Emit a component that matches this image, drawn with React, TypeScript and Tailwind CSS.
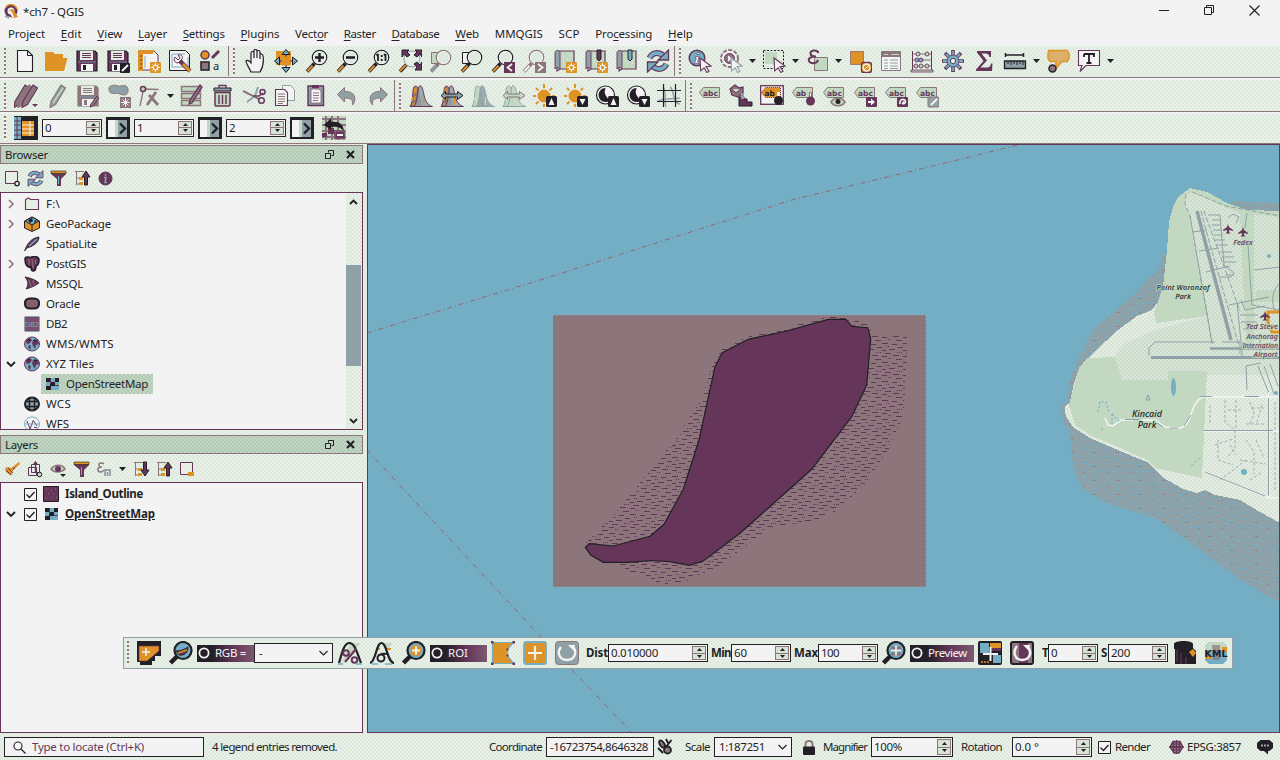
import React, { useLayoutEffect, useRef, useState } from "react";

const K = "#221f26";
const P = "#65365a";
const M = "#8c757b";
const G = "#c2d8c1";
const S = "#8fa1a6";
const B = "#74aec5";
const O = "#df9226";
const W = "#f3f3f3";

const dither =
  "bg-[repeating-conic-gradient(#dde9dc_0_25%,#e9f0e8_0_50%)] bg-[length:4px_4px]";
const ditherGreen =
  "bg-[repeating-conic-gradient(#b4c9b8_0_25%,#c0d6c0_0_50%)] bg-[length:4px_4px]";

/* Text set to a given width by adjusting its letter spacing. */
function Fit({ w, children, className = "" }: { w: number; children: React.ReactNode; className?: string }) {
  const ref = useRef<HTMLSpanElement>(null);
  const [ls, setLs] = useState(0);
  useLayoutEffect(() => {
    const el = ref.current;
    if (!el) return;
    const n = (el.textContent || "").length;
    setLs((w - el.getBoundingClientRect().width) / n);
  }, [w]);
  return (
    <span ref={ref} className={"inline-block shrink-0 whitespace-pre " + className} style={{ letterSpacing: ls }}>
      {children}
    </span>
  );
}

function Svg({ children, s = 24 }: { children: React.ReactNode; s?: number }) {
  return (
    <svg width={s} height={s} viewBox={"0 0 " + s + " " + s} fill="none" className="block shrink-0">
      {children}
    </svg>
  );
}

function Cell({ children }: { children: React.ReactNode }) {
  return (
    <div className="flex w-[31px] shrink-0 items-center justify-center">
      <Svg>{children}</Svg>
    </div>
  );
}

function Grip({ h = "h-[27px]" }: { h?: string }) {
  return <div className={"w-[2px] shrink-0 bg-[linear-gradient(#8c757b_50%,#f3f3f3_50%)] bg-[length:2px_4px] " + h} />;
}

function Arrow() {
  return (
    <svg width="7" height="4" viewBox="0 0 7 4" className="shrink-0">
      <path d="M0 0h7L3.5 4z" fill={K} />
    </svg>
  );
}

/* ---------- shared glyph parts ---------- */
const Lens = ({ c = K, h = O, f = "#dfeadf" }: { c?: string; h?: string; f?: string }) => (
  <>
    <path d="M9.5 14.5L2 22.500" stroke={c} strokeWidth="3.600" />
    <path d="M7.500 16.700L2.300 22.200" stroke={h} strokeWidth="2" />
    <circle cx="14.500" cy="8.500" r="7.200" fill={f} stroke={c} strokeWidth="1.200" />
    <circle cx="14.500" cy="8.500" r="6" stroke={W} strokeWidth="1" />
  </>
);
const Floppy = ({ c = P, b = K }: { c?: string; b?: string }) => (
  <>
    <path d="M2 2h18l2 2v18H2z" fill={c} stroke={b} strokeWidth="1.200" />
    <path d="M5 2h13v9H5z" fill="#e4ede3" />
    <path d="M7 4.500h9M7 6.500h9M7 8.500h9" stroke={c} />
    <path d="M3.500 13h17" stroke={B} strokeDasharray="2 1" />
    <path d="M6 15h12v7H6z" fill={W} />
    <path d="M8 16h3v5H8z" fill={b} />
  </>
);
const Badge = () => (
  <>
    <rect x="13" y="13" width="11" height="11" rx="1" fill={O} />
    <circle cx="18.500" cy="18.500" r="2.300" stroke={W} strokeWidth="1.200" />
    <path d="M18.500 14v2M18.500 21v2M14 18.500h2M21 18.500h2M15.500 15.500l1 1M20.500 20.500l1 1M21.500 15.500l-1 1M16.500 20.500l-1 1" stroke={W} />
  </>
);
const Cursor = ({ c = P }: { c?: string }) => <path d="M12 9l11 8-5 .6 3 4.600-2.200 1.300-2.700-4.700-3.400 3z" fill={W} stroke={c} strokeWidth="1.100" />;
const Refresh = () => (
  <>
    <path d="M3.500 9C6 4 11 2.500 17 6" stroke={P} strokeWidth="6" />
    <path d="M3.500 9C6 4 11 2.500 17 6" stroke={B} strokeWidth="3.600" />
    <path d="M22.500 1v10H12z" fill={B} stroke={P} strokeWidth="1.300" />
    <path d="M20.500 15C18 20 13 21.500 7 18" stroke={P} strokeWidth="6" />
    <path d="M20.500 15C18 20 13 21.500 7 18" stroke={B} strokeWidth="3.600" />
    <path d="M1.500 23V13H12z" fill={B} stroke={P} strokeWidth="1.300" />
  </>
);
const Pencil = ({ c = M, f = M, x = 0 }: { c?: string; f?: string; x?: number }) => (
  <path d={"M" + (16 + x) + " 1l4.500 3-10 16.500-5.500 3 1-6z"} fill={f} stroke={c} strokeWidth="1.2" />
);
const Book = () => (
  <>
    <path d="M4 2h17v18H7l-3 2z" fill={G} stroke={P} strokeWidth="1.200" />
    <path d="M2 3.500C2 1 7 1 7 3.500V20c-1-2-5-2-5 0z" fill={S} stroke={P} strokeWidth="0.900" />
    <path d="M10 7h1M14 10h1M17 6h1M12 15h1M10 12h1M17 14h1" stroke={W} />
  </>
);
const Label = ({ t = "abc" }: { t?: string }) => (
  <>
    <path d="M1.500 8.500l4-5h16v10h-16z" fill={G} stroke={M} />
    <text x="5" y="11.500" fontFamily="DejaVu Sans" fontSize="7.500" fontWeight="bold" fill={P} textLength={t.length === 3 ? 15 : 10}>{t}</text>
  </>
);
const Histo = ({ a = P, b = M, c = S, o = O }: { a?: string; b?: string; c?: string; o?: string }) => (
  <>
    <path d="M1 22.500C4 19 3.500 8 4.500 3.500 6 1 9 2 9.500 6L12 22.500z" fill={b} stroke={a} />
    <path d="M5 22.500C8.500 19 8.500 6 10 2.500 12.500-.5 14 6 15 11c1 6 4 10.500 8.500 11.500z" fill={c} fillOpacity="0.850" stroke={a} />
    <path d="M5.500 4v6M7 3.500v5M3.500 13v4M6 12v4M14.500 13v8M3 20h3" stroke={o} strokeWidth="1.300" />
  </>
);
const Sun = () => (
  <>
    <path d="M11 0v23M0 12h22M3 4l16 16M19 4L3 20" stroke={O} strokeWidth="2" />
    <circle cx="11" cy="12" r="8" fill="#e6ede5" />
    <circle cx="11" cy="12" r="6.500" fill={O} />
  </>
);
const Contrast = () => (
  <>
    <circle cx="10.500" cy="11" r="9" fill={W} stroke={K} strokeWidth="1.200" />
    <path d="M10.500 4a7 7 0 1 0 5 12A9 9 0 0 1 10.500 4z" fill={K} />
  </>
);
const Up = () => (
  <>
    <rect x="13" y="12" width="11" height="11" rx="1.500" fill={K} />
    <path d="M18.500 14l3 7h-6z" fill={W} />
  </>
);
const Down = () => (
  <>
    <rect x="13" y="12" width="11" height="11" rx="1.500" fill={K} />
    <path d="M15.500 15h6l-3 6z" fill={W} />
  </>
);

/* ---------- toolbars ---------- */
const Divider = () => <div className="w-px shrink-0 self-stretch bg-[#8c757b]" />;

function Toolbar1() {
  return (
    <div className={"flex h-8 shrink-0 items-center pb-[2px] pl-1 pr-2 shadow-[inset_0_-1px_0_#8c757b] " + dither}>
      <Grip />
      <div className="w-[3px] shrink-0" />
      <Cell><path d="M4.500 1.500h10l5 5v16h-15z" fill={W} stroke={K} strokeWidth="1.100" /><path d="M14.500 1.500v5h5" stroke={K} /></Cell>
      <Cell><path d="M1 3h8l2 2h8v4h4.500L20 22H1z" fill={O} /></Cell>
      <Cell><Floppy /></Cell>
      <Cell><Floppy /><rect x="14" y="14" width="10" height="10" rx="1" fill={K} /><path d="M16 22l6-6" stroke={W} strokeWidth="2" /></Cell>
      <Cell><path d="M2 2h15l4 4v15H2z" fill={W} stroke={P} /><path d="M1 1h15v4H6v17H1z" fill={O} /><path d="M3 7h2M3 11h2M3 15h2M3 19h2" stroke={P} /><path d="M8 7v12" stroke={B} /><Badge /></Cell>
      <Cell><path d="M1.500 1.500h16l4 4v16h-20z" fill={W} stroke={K} /><path d="M4 5h13M4 5v13h16V8" stroke={B} /><path d="M11 11l11 11" stroke={P} strokeWidth="4.500" /><path d="M15 15l7 7" stroke={O} strokeWidth="2.800" /><path d="M7 8l3 3 2-2-2-3c4-1 5 2 4 4l-4 4c-3 0-5-3-3-6z" fill={W} stroke={P} /></Cell>
      <Cell><circle cx="6" cy="6" r="4" fill={O} stroke={P} strokeWidth="1.500" /><path d="M13 9l7-7" stroke={P} strokeWidth="3" /><rect x="2" y="13" width="8" height="8" fill={M} stroke={K} strokeWidth="1.500" /><text x="14" y="21" fontFamily="Noto Sans" fontSize="11" fill={K}>a</text></Cell>
      <div className="w-[2px]" />
      <Divider />
      <div className="w-[4px] shrink-0" />
      <Grip />
      <div className="w-[4px] shrink-0" />
      <Cell><path d="M8 23C6 18 3 15 3 12c2-2 4 1 5 2V4c0-2 3-2 3 0v5V2c0-2 3-2 3 0v7V3c0-2 3-2 3 0v7V6c0-2 3-1 3 1 1 6 0 11-3 16z" fill={W} stroke={K} strokeWidth="1.200" /></Cell>
      <Cell><path d="M2 2h15v14H2z" fill={O} /><path d="M12 1v22M1 12h22" stroke={P} strokeWidth="1.500" /><path d="M12 .5l4 5H8zM12 23.500l-4-5h8zM.5 12l5-4v8zM23.500 12l-5-4v8z" fill={B} stroke={K} /><rect x="7.500" y="7.500" width="9" height="9" fill={O} /></Cell>
      <Cell><Lens /><path d="M10 8.500h9M14.500 4v9" stroke={K} strokeWidth="2.400" /></Cell>
      <Cell><Lens /><path d="M10 8.500h9" stroke={K} strokeWidth="2.600" /></Cell>
      <Cell><Lens /><path d="M11 5v7M18.500 5v7M9.500 6.500L11 5M17 6.500L18.500 5M14.700 6v2M14.700 10v2" stroke={K} strokeWidth="1.800" /></Cell>
      <Cell><path d="M9 15L2 22.500" stroke={K} strokeWidth="3.600" /><path d="M8 16l-6 6" stroke={O} strokeWidth="2" /><circle cx="14" cy="10" r="8" fill="#e6efe5" stroke={S} /><path d="M4 1h7L9 3l3 3-3 2-3-3-2 3zM24 1h-7l2 2-3 3 3 2 3-3 2 3zM24 21h-7l2-3-3-3 3-2 3 3 2-3z" fill={P} stroke={K} /></Cell>
      <Cell><path d="M2.500 3.500h9v11h-9z" fill={G} stroke={M} /><Lens c={M} h={S} /></Cell>
      <Cell><path d="M2.500 3.500h9v11h-9z" fill={W} stroke={K} /><Lens /></Cell>
      <Cell><Lens /><rect x="13" y="13" width="11" height="11" fill={P} /><path d="M21 15l-4.500 3.500L21 22" stroke={W} strokeWidth="1.800" /></Cell>
      <Cell><Lens c={M} h={W} /><rect x="13" y="13" width="11" height="11" fill={M} /><path d="M16 15l4.500 3.500L16 22" stroke={W} strokeWidth="1.800" /></Cell>
      <Cell><Book /><Badge /></Cell>
      <Cell><Book /><path d="M13 1h4v9l-2 2-2-2z" fill={P} stroke={K} /><Badge /></Cell>
      <Cell><Book /><path d="M13 1h4v9l-2 2-2-2z" fill={B} stroke={K} /></Cell>
      <Cell><Refresh /></Cell>
      <div className="w-px" />
      <Divider />
      <div className="w-[4px] shrink-0" />
      <Grip />
      <div className="w-[3px] shrink-0" />
      <Cell><circle cx="9" cy="9" r="7.800" fill={B} stroke={P} strokeWidth="1.500" /><path d="M9.500 3.500h2.500l-.5 2H9zM7.500 7.500h3.500L9.500 13H11v1.500H6.500L8.300 9H7z" fill={W} stroke={P} strokeWidth="0.600" /><Cursor /></Cell>
      <Cell><circle cx="10.500" cy="9.500" r="8.500" stroke={M} strokeWidth="2" strokeDasharray="4 1.500" fill={W} /><circle cx="10.500" cy="9.500" r="5" fill={M} stroke={P} /><path d="M9 6.500l4.500 3-4.500 3z" fill={W} /><Cursor c={S} /></Cell>
      <div className="flex w-3 justify-center"><Arrow /></div>
      <Cell><path d="M3 3h12v12H3z" fill={G} /><path d="M1.500 1.500h20v18h-20z" stroke={K} strokeDasharray="2 1.500" /><Cursor /></Cell>
      <div className="flex w-[13px] justify-center"><Arrow /></div>
      <Cell><path d="M8.500 8.500h13v13h-13z" fill={G} stroke={M} /><path d="M12.500 4C11 0 4 1 4.500 4.500S8 7.500 10 7.500C5 7.500 2 9 3 12s8 3 9-1" stroke={P} strokeWidth="2" /></Cell>
      <div className="flex w-[11px] justify-center"><Arrow /></div>
      <Cell><path d="M2.500 2.500h13v13h-13z" fill={O} stroke={P} strokeDasharray="1 1" /><rect x="13.500" y="13.500" width="10" height="10" rx="2" fill={O} stroke={P} strokeWidth="1.300" /><circle cx="18.500" cy="18.500" r="3.500" stroke={W} strokeWidth="1.400" /><path d="M16 21l5-5" stroke={W} /></Cell>
      <Cell><path d="M2.500 2.500h19v19h-19z" fill={W} stroke={M} /><path d="M3 3h18v5H3z" fill={M} /><path d="M5 5.500h4M12 5.500h8" stroke={G} /><path d="M5 11h4M11 11h8M5 14h4M11 14h8M5 17h4M11 17h8M5 19.500h4M11 19.500h8" stroke={S} /></Cell>
      <Cell><path d="M2 5h20M2 11h20M2 17h20" stroke={M} /><path d="M2.500 2v19M21.500 2v19" stroke={P} /><path d="M1 21h22v2H1z" fill={G} stroke={P} strokeWidth="0.800" /><g stroke={P} strokeWidth="0.900" fill={G}><circle cx="8" cy="5" r="2" /><circle cx="17" cy="5" r="2" /><circle cx="7" cy="11" r="2" fill={B} /><circle cx="11" cy="11" r="2" fill={B} /><circle cx="6" cy="17" r="2" /><circle cx="11" cy="17" r="2" /><circle cx="17" cy="17" r="2" /></g></Cell>
      <Cell><path d="M12 1v22M1 12h22M4 4l16 16M20 4L4 20" stroke={P} strokeWidth="3.600" /><path d="M12 2v20M2 12h20M5 5l14 14M19 5L5 19" stroke={B} strokeWidth="1.800" /><circle cx="12" cy="12" r="6" fill={B} stroke={P} strokeWidth="0.800" /><circle cx="12" cy="12" r="2.600" fill={W} stroke={P} /></Cell>
      <Cell><path d="M5 2h14v6h-1.500c-.5-3-2-3.500-4-3.500H9.500l5.500 7-6.500 7H15c2.500 0 3.500-1.500 4-4h1.500L20 22H4v-1.500L11.500 12 5 3.500z" fill={P} /></Cell>
      <Cell><path d="M2 6h19M2.500 4v4M20.500 4v4" stroke={K} strokeWidth="1.500" /><path d="M1.500 12h21v7.500h-21z" fill={S} stroke={K} strokeWidth="1.300" /><path d="M5 12v3M8 12v4M11 12v3M14 12v4M17 12v3M20 12v4" stroke={K} /></Cell>
      <div className="flex w-3 justify-center"><Arrow /></div>
      <Cell><path d="M3 1.500h18l2 3v5l-2 3h-5l-6 7v-7H4l-2-3v-5z" fill="#dcb06a" stroke={O} strokeWidth="1.500" /><circle cx="6.500" cy="19.500" r="3.500" fill={M} stroke={K} strokeWidth="1.500" /></Cell>
      <Cell><path d="M1.500 1.500h21v15H9l-6 6 2-6H1.500z" fill={W} stroke={P} strokeWidth="1.100" /><path d="M7 5h10v3M7 8V5M12 5v9M9.500 14h5" stroke={K} strokeWidth="1.800" /></Cell>
      <div className="flex w-3 justify-center"><Arrow /></div>
    </div>
  );
}

function Toolbar2() {
  return (
    <div className={"flex h-[34px] shrink-0 items-center pl-1 pt-[2px] pr-2 shadow-[inset_0_-1px_0_#8c757b,inset_0_2px_0_#f3f3f3] " + dither}>
      <Grip />
      <div className="w-[4px] shrink-0" />
      <Cell><Pencil f={M} c={P} x={-5} /><Pencil f={M} x={-1} /><Pencil f={M} c={P} x={3} /><path d="M18 20h6l-3 3z" fill={P} /></Cell>
      <Cell><Pencil c={M} f={S} /><path d="M18 4L8 19" stroke={G} strokeWidth="1.500" /></Cell>
      <Cell><Floppy c={M} b={M} /><path d="M21 12l2 2-6 8-3 1 1-3z" fill={M} stroke={P} /></Cell>
      <Cell><path d="M2 5c0-5 7-4 9-3s9-3 10 3-4 7-8 5-11 2-11-5z" fill={S} stroke={M} /><rect x="13" y="13" width="11" height="11" fill={M} /><path d="M18.500 14v9M14 18.500h9M15.500 15.500l6 6M21.500 15.500l-6 6" stroke={W} /></Cell>
      <Cell><path d="M2 22L5.500 5l15 .5" stroke={M} strokeWidth="1.300" /><circle cx="5" cy="5" r="2.500" fill={G} stroke={P} strokeWidth="1.500" /><path d="M9 21l9-13M11 11l9 10" stroke={M} strokeWidth="2.800" /></Cell>
      <div className="flex w-[11px] justify-center"><Arrow /></div>
      <Cell><path d="M1.500 2.500h19v5h-19zM1.500 9.500h19v5h-19zM1.500 16.500h19v5h-19z" fill={G} stroke={M} strokeWidth="1.400" /><path d="M20 1l2 2-10 16-3 1 1-4z" fill={M} stroke={P} strokeWidth="1.300" /></Cell>
      <Cell><path d="M4 8.500h15V21a1 1 0 0 1-1 1H5a1 1 0 0 1-1-1z" fill={G} stroke={P} strokeWidth="1.500" /><path d="M3 4h17v3H3z" fill={S} stroke={K} /><path d="M8 4V1.500h7V4M8 11v9M11.500 11v9M15 11v9" stroke={P} strokeWidth="1.400" /></Cell>
      <Cell><path d="M1 7l16 8" stroke={M} strokeWidth="2" /><path d="M5 18l8-6 3-9" stroke={S} strokeWidth="2" /><path d="M11 12h6l4-3" stroke={P} strokeWidth="1.500" /><circle cx="20.500" cy="8" r="2.500" stroke={P} strokeWidth="1.500" /><circle cx="19.500" cy="16.500" r="2.800" stroke={P} strokeWidth="1.500" /></Cell>
      <Cell><path d="M9.500 1.500h8l4 4v11h-12z" fill={W} stroke={S} /><path d="M2.500 5.500h9l3 3v13h-12z" fill={W} stroke={P} strokeWidth="1.100" /><path d="M5 10h7M5 12.500h7M5 15h7M5 17.500h7M5 19.500h5" stroke={M} /></Cell>
      <Cell><path d="M4 2h15.500v19.500H4z" fill={S} stroke={P} strokeWidth="1.400" /><path d="M7 5h8l2 2v12H7z" fill={W} stroke={P} strokeWidth="0.600" /><path d="M8 1h7v3H8z" fill={P} /><path d="M9 9h6M9 11.500h6M9 14h6M9 16.500h5" stroke={M} /></Cell>
      <Cell><path d="M2.500 10.500l7-7v4c10-.5 13 7 8 13.500.5-5-1-7-8-7v4z" fill={S} stroke={M} /></Cell>
      <Cell><path d="M21.500 10.500l-7-7v4c-10-.5-13 7-8 13.500-.5-5 1-7 8-7v4z" fill={S} stroke={M} /></Cell>
      <div className="w-px" />
      <Divider />
      <div className="w-[4px] shrink-0" />
      <Grip />
      <div className="w-[4px] shrink-0" />
      <Cell><Histo /></Cell>
      <Cell><Histo /><path d="M1 11.500l4.500-4V10h12V7.500l5.500 4-5.500 4V13h-12v2.500z" fill={S} stroke={K} /></Cell>
      <Cell><Histo a={S} b={G} c={S} o={G} /></Cell>
      <Cell><Histo a={S} b={G} c={G} o={G} /><path d="M1 11.500l4.500-4V10h12V7.500l5.500 4-5.500 4V13h-12v2.500z" fill={G} stroke={M} /></Cell>
      <Cell><Sun /><Up /></Cell>
      <Cell><Sun /><Down /></Cell>
      <Cell><Contrast /><Up /></Cell>
      <Cell><Contrast /><Down /></Cell>
      <Cell><path d="M6 3c4 2 1 18 3 20M13 3c4 2 3 18 10 17M1 17c8-4 16-1 22-3" stroke={S} strokeWidth="1.500" /><path d="M6.500 0v23M18.500 0v23M0 6.500h24M0 17.500h24" stroke={K} strokeWidth="1.200" /></Cell>
      <div className="w-px" />
      <Divider />
      <div className="w-[4px] shrink-0" />
      <Grip />
      <div className="w-[2px] shrink-0" />
      <Cell><Label /></Cell>
      <Cell><path d="M1 5l5-4 4 3 4-1v6l-5 4-6-2z" fill={M} stroke={P} strokeWidth="1.300" /><path d="M3 5l4 4 5-4" fill={G} stroke={P} /><path d="M10 22v-9h5v2h3v3h5v4z" fill={P} stroke={K} /><path d="M12 9h3v6h-3z" fill={S} /></Cell>
      <Cell><rect x="0.700" y="1.700" width="22.600" height="18.600" fill={W} stroke={P} strokeWidth="1.300" /><path d="M1.500 8.500l4-5h15v10h-15z" fill={O} stroke={P} strokeDasharray="1 1" /><text x="4.500" y="11.500" fontFamily="DejaVu Sans" fontSize="7.500" fontWeight="bold" fill={K}>ab</text><path d="M17 8h3v7h-3z" fill={W} /><circle cx="18.500" cy="16.500" r="4.500" fill={K} /></Cell>
      <Cell><Label t="ab" /><path d="M18.500 8.500h2v6h-2z" fill={W} stroke={M} /><circle cx="19.500" cy="17" r="4.500" fill={P} /></Cell>
      <Cell><Label /><path d="M9 18c3-5 11-5 14 0-3 5-11 5-14 0z" fill={G} stroke={M} strokeWidth="1.500" /><circle cx="16" cy="17.500" r="2.500" fill={K} /></Cell>
      <Cell><Label /><rect x="13" y="13" width="11" height="10" rx="1" fill={P} /><path d="M15 17h3v-2.500l4 3.500-4 3.500V19h-3z" fill={W} /></Cell>
      <Cell><Label /><rect x="13" y="13" width="11" height="10" rx="1" fill={P} /><path d="M16 20c-1-5 5-6 5.500-2.500 0 2-2 2.500-3 2l1.500-2" stroke={W} strokeWidth="1.600" /></Cell>
      <Cell><Label /><rect x="13" y="13" width="11" height="10" rx="1" fill={S} stroke={M} /><path d="M16 21l6-6" stroke={W} strokeWidth="2" /></Cell>
    </div>
  );
}

function Spin({ v, w, tw, h = "h-[18px]" }: { v: string; w: string; tw: number; h?: string }) {
  return (
    <div className={"flex shrink-0 items-stretch border border-[#221f26] bg-[#f3f3f3] pl-[2px] text-[11.500px] " + w + " " + h}>
      <div className="flex flex-1 items-center"><Fit w={tw}>{v}</Fit></div>
      <div className="my-px mr-px flex w-[14px] flex-col border border-[#8c757b] bg-[#d6e3d5]">
        <div className="flex flex-1 items-center justify-center border-b border-[#8c757b]"><svg width="5" height="3"><path d="M0 3h5L2.500 0z" fill={K} /></svg></div>
        <div className="flex flex-1 items-center justify-center"><svg width="5" height="3"><path d="M0 0h5L2.500 3z" fill={K} /></svg></div>
      </div>
    </div>
  );
}

function NextButton() {
  return (
    <div className="mx-1 shrink-0">
      <Svg>
        <path d="M0 1h24v22H0z" fill={K} />
        <path d="M2 4h19v17H2z" fill={W} />
        <path d="M9 4h3v17H9z" fill={G} />
        <path d="M12 4h9v17h-9z" fill={S} />
        <path d="M14 7.500l5 5-5 5" stroke={K} strokeWidth="2.400" />
      </Svg>
    </div>
  );
}

function Toolbar3() {
  return (
    <div className={"flex h-8 shrink-0 items-center pb-px pl-1 shadow-[inset_0_-1px_0_#8c757b,inset_0_2px_0_#f3f3f3] " + dither}>
      <Grip h="h-[24px]" />
      <div className="mx-[4px] ml-2 shrink-0">
        <Svg><path d="M0 0h24v24H0z" fill={K} /><path d="M0 1h7v22H0z" fill={B} /><path d="M3 1v22M0 5h7M0 9h7M0 14h7M0 19h7" stroke={P} /><path d="M8 5h12v15H8z" fill={O} /><path d="M8 9h12M8 13h12M8 17h12M16 5v15" stroke={W} /></Svg>
      </div>
      <Spin v="0" w="w-[60px]" tw={7} />
      <NextButton />
      <Spin v="1" w="w-[60px]" tw={7} />
      <NextButton />
      <Spin v="2" w="w-[60px]" tw={7} />
      <NextButton />
      <div className="ml-1 shrink-0">
        <Svg><path d="M0 0h24v24H0z" fill={G} /><path d="M0 3h24M0 9h24M0 15h24M0 21h24M4 0v24M10 0v24M16 0v24" stroke={M} strokeWidth="2" /><path d="M6 12h6v6H6zM12 14h10v9H12zM0 17h5v4H0z" fill={P} /><path d="M2 9l7-7v4c8-1 12 2 13 9-4-4-7-5-13-4v3z" fill={K} /><rect x="13" y="15" width="10" height="8" fill={P} stroke={M} /><path d="M15 19h6" stroke={W} strokeWidth="2" /></Svg>
      </div>
    </div>
  );
}

/* ---------- left docks ---------- */
function DockTitle({ t, w }: { t: string; w: number }) {
  return (
    <div className={"flex h-[19px] shrink-0 items-center justify-between pl-[5px] pr-2 text-[11.500px] shadow-[inset_0_0_0_1px_#8c757b] " + ditherGreen}>
      <Fit w={w}>{t}</Fit>
      <div className="flex items-center gap-3">
        <svg width="9" height="9" fill="none"><path d="M3.500 2.500v-2h5v5h-2" stroke={K} /><path d="M.5 3.500h5v5h-5z" fill={G} stroke={K} /></svg>
        <svg width="9" height="9"><path d="M1 1l7 7M8 1L1 8" stroke={K} strokeWidth="2.200" /></svg>
      </div>
    </div>
  );
}

const Filter = () => <><path d="M1 1h15v3l-5 5v7H7V9L1 4z" fill={P} /><path d="M1 1h15v2.500H1z" fill={O} stroke={K} strokeWidth="0.600" /><path d="M8.500 6v8" stroke={B} /></>;
const Expand = ({ up }: { up?: boolean }) => (
  <>
    <path d="M1 1.500h9M2.500 2v13M2.500 8h4M2.500 14h4" stroke={M} />
    <path d="M5 7h4v3H5zM5 12h4v3H5z" fill={O} />
    {up ? <path d="M8 7l4-6 4 6h-2.500v8h-3V7z" fill={P} stroke={K} /> : <path d="M8 9l4 6 4-6h-2.500V1h-3v8z" fill={P} stroke={K} />}
  </>
);
function Small({ children }: { children: React.ReactNode }) {
  return <svg width="17" height="17" viewBox="0 0 17 17" fill="none" className="shrink-0">{children}</svg>;
}

const Globe = ({ f = B }: { f?: string }) => (
  <>
    <ellipse cx="8" cy="8" rx="7.500" ry="7" fill={f} stroke={P} />
    <path d="M2 4l4-2 2 2-2 3-2 1-2-1zM9 4l5 0 1 4-3 1-1 4-2-3-1-3zM5 9l2 1-1 4-2-3z" fill={P} />
    <path d="M10 3l3 1-2 2M4 3l2 0-1 3" fill={K} />
  </>
);
const Tiles = () => (
  <>
    <path d="M2 2h13v12H2z" fill={B} />
    <path d="M2 2h5v4H2zM11 2h4v4h-4zM6 6h5v4H6zM2 10h5v4H2z" fill={K} />
    <path d="M6 3h1v5H6zM11 9h4v1h-4z" fill={P} />
  </>
);

const tree: { n: string; w: number; open?: string; icon: React.ReactNode; sel?: boolean }[] = [
  { n: "F:\\", w: 14, open: ">", icon: <path d="M1.500 3.500l3-1.500 2 1.500H14.500v10h-13z" fill="#e6eee5" stroke={P} strokeWidth="1.100" /> },
  { n: "GeoPackage", w: 65, open: ">", icon: <><path d="M0.500 5L8 1l7.500 4v7L8 15.500 0.500 12z" fill={O} stroke={K} /><path d="M1 5l7-4 7 4-7 4z" fill={B} stroke={K} /><path d="M8 9v6" stroke={K} /><path d="M4 4l4-2 1 3-3 2zM11 4l2 1-3 2z" fill={K} /></> },
  { n: "SpatiaLite", w: 51, icon: <><path d="M0.500 15C3 8 7 2 15 1c0 5-5 9-12 11z" fill={P} stroke={K} strokeWidth="0.800" /><path d="M5 10l8-7" stroke={B} strokeWidth="1.400" /></> },
  { n: "PostGIS", w: 40, open: ">", icon: <><path d="M1 3c0-3 4-2 6-1.500C9 0 15 0 15 4s-1 5-3 6c0 6-5 7-5 1-4 1-6-3-6-8z" fill={P} stroke={K} strokeWidth="1.600" /><path d="M5 3v6M8 3l1 9M11.500 4v4" stroke={M} /></> },
  { n: "MSSQL", w: 37, icon: <><path d="M1 1c6 1 11 3 14 6-4 3-9 5-13 6 3-5 2-8-1-12z" fill={P} stroke={K} strokeWidth="0.800" /><path d="M5 4l2 7M9 4l1 5" stroke={M} /></> },
  { n: "Oracle", w: 34, icon: <rect x="1" y="2.500" width="14" height="10" rx="4.500" fill="#84606f" stroke={K} strokeWidth="2.200" /> },
  { n: "DB2", w: 21, icon: <><rect x="0.500" y="0.500" width="15" height="15" rx="1" fill="#76506a" stroke={S} /><text x="1" y="10.500" fontFamily="Liberation Sans" fontSize="7" textLength="14" fill={B}>DB2</text></> },
  { n: "WMS/WMTS", w: 68, icon: <Globe /> },
  { n: "XYZ Tiles", w: 48, open: "v", icon: <Globe /> },
  { n: "OpenStreetMap", w: 82, sel: true, icon: <Tiles /> },
  { n: "WCS", w: 25, icon: <><ellipse cx="8" cy="8" rx="7" ry="6.500" fill={S} stroke={K} strokeWidth="2" /><path d="M1 5.500h14M1 10.500h14M5.500 2v12M10.500 2v12" stroke={K} strokeWidth="1.500" /></> },
  { n: "WFS", w: 23, icon: <><ellipse cx="8" cy="8" rx="7.500" ry="7" fill={W} stroke={B} /><path d="M3 5l3 8 3-8M9 4l4 6M10 11l3 1" stroke={P} /><path d="M1 8h14" stroke={B} /></> },
];

function Chevron({ k }: { k?: string }) {
  return (
    <svg width="10" height="10" fill="none" className="shrink-0">
      {k === ">" && <path d="M3 1l4 4-4 4" stroke={M} strokeWidth="1.600" />}
      {k === "v" && <path d="M1 3l4 4 4-4" stroke={K} strokeWidth="1.800" />}
    </svg>
  );
}

function BrowserDock() {
  return (
    <div className="flex h-[285px] shrink-0 flex-col">
      <DockTitle t="Browser" w={43} />
      <div className="flex h-[28px] shrink-0 items-center gap-[6.200px] pl-1 pt-px">
        <Small><path d="M1.500 1.500h12v12h-12z" fill="#e6eee5" stroke={P} /><circle cx="13" cy="13.500" r="2.200" fill={W} stroke={K} strokeWidth="1.300" /></Small>
        <svg width="17" height="17" viewBox="0 0 24 24" fill="none"><Refresh /></svg>
        <Small><Filter /></Small>
        <Small><Expand up /></Small>
        <Small><circle cx="8.500" cy="8.500" r="6.500" fill={P} stroke={P} /><path d="M8.500 3.800v2M7 7.500h2l-1 5h2" stroke={S} strokeWidth="1.500" /></Small>
      </div>
      <div className="flex flex-1 overflow-hidden border border-[#65365a] bg-[#f3f3f3]">
        <div className="flex flex-1 flex-col pt-px text-[11.500px]">
          {tree.map((r) => (
            <div key={r.n} className="flex h-5 shrink-0 items-center pb-px pl-[5px]">
              <Chevron k={r.open} />
              <div className={"flex h-5 items-center " + (r.sel ? "ml-[25px] pl-[3px] pr-[5px] " + ditherGreen : "ml-2")}>
                <svg width="16" height="16" fill="none" className="mr-[6px] shrink-0">{r.icon}</svg>
                <Fit w={r.w}>{r.n}</Fit>
              </div>
            </div>
          ))}
        </div>
        <div className={"flex w-4 shrink-0 flex-col items-center pr-px " + dither}>
          <svg width="9" height="6" fill="none" className="mt-[6px]"><path d="M1 5l3.500-3.500L8 5" stroke={K} strokeWidth="1.800" /></svg>
          <div className="mt-[60px] h-[101px] w-[15px] bg-[#8fa1a6]" />
          <svg width="9" height="6" fill="none" className="mt-auto mb-[5px]"><path d="M1 1l3.500 3.500L8 1" stroke={K} strokeWidth="1.800" /></svg>
        </div>
      </div>
    </div>
  );
}

function Check() {
  return (
    <svg width="13" height="13" fill="none" className="shrink-0">
      <path d="M.5.5h12v12H.5z" fill={W} stroke={K} />
      <path d="M2.500 6.500l3 3L10.500 4" stroke={K} strokeWidth="1.300" />
    </svg>
  );
}

function LayersDock() {
  return (
    <div className="mt-[5px] flex flex-1 flex-col">
      <DockTitle t="Layers" w={33} />
      <div className="flex h-[28px] shrink-0 items-center gap-[6px] pl-1 pt-[2px]">
        <Small><path d="M1 7l3-1 3 1 8-6 1 2-7 6-1 5H6l-4-3z" fill={O} /><path d="M2 9l5 5M4 7l5 5M9 9l2-3" stroke={P} /></Small>
        <Small><path d="M1.500 6.500h8v8h-8zM4.500 3.500h8v8h-8z" stroke={P} /><path d="M8.500 1v11M7 3l1.500-2L10 3" stroke={P} strokeWidth="1.300" /><circle cx="12.500" cy="13.500" r="2.300" fill={G} stroke={K} /></Small>
        <Small><path d="M1 8c4-5 11-5 14 0-4 4-11 4-14 0z" fill={G} stroke={M} strokeWidth="1.500" /><circle cx="8" cy="8" r="3" fill={P} /><path d="M10 13h6l-3 3z" fill={K} /></Small>
        <Small><Filter /></Small>
        <Small><path d="M8 3C6 1 2 2 3 4.500S5 6 6 6C3 6 1 7 2 9.500S7 11 8 9" stroke={M} strokeWidth="1.500" /><path d="M9 15V9h5v6M11.500 15v-4" stroke={S} strokeWidth="1.800" /></Small>
        <Arrow />
        <div className="ml-px flex gap-[6px]">
          <Small><Expand /></Small>
          <Small><Expand up /></Small>
          <Small><path d="M1.500 1.500h12v12h-12z" fill="#e6eee5" stroke={P} /><path d="M9 11h6v4H9z" fill={O} /></Small>
        </div>
      </div>
      <div className="flex flex-1 flex-col border border-[#65365a] bg-[#f3f3f3] pt-px text-[11.500px] font-bold">
        <div className="flex h-5 items-center pl-[23px]"><Check /><svg width="16" height="16" className="ml-[6px] mr-[6px]"><path d="M.5.5h15v15H.5z" fill={P} stroke={K} /><path d="M3 3h1M8 4h1M12 3h1M5 8h1M10 8h1M3 12h1M8 12h1M13 11h1" stroke={M} /></svg><Fit w={78}>Island_Outline</Fit></div>
        <div className="flex h-5 items-center pl-[5px]"><Chevron k="v" /><div className="w-2" /><Check /><svg width="16" height="16" className="ml-[6px] mr-[6px]"><Tiles /></svg><Fit w={90} className="underline underline-offset-1">OpenStreetMap</Fit></div>
      </div>
    </div>
  );
}

/* ---------- map canvas ---------- */
const plane = "M0-5l1 3 4 3v1L1 1v2l1.500 1.500h-5L-1 3V1l-4 1V1l4-3z";
function MapCanvas() {
  return (
    <svg width="911" height="587" viewBox="368 145 911 587" className="block" fill="none">
      <defs>
        <pattern id="lt" width="4" height="4" patternUnits="userSpaceOnUse"><path d="M0 0h4v4H0z" fill="#d6e3d5" /><path d="M0 0h2v2H0zM2 2h2v2H2z" fill="#e5ece4" /></pattern>
        <pattern id="mid" width="4" height="4" patternUnits="userSpaceOnUse"><path d="M0 0h4v4H0z" fill="#cadcc9" /><path d="M0 0h2v2H0zM2 2h2v2H2z" fill="#d9e5d8" /></pattern>
        <pattern id="mud" width="23" height="14" patternUnits="userSpaceOnUse"><path d="M0 0h23v14H0z" fill={S} /><path d="M0 1.500h4M5 1.500h1M9 2.500h5M17 1.500h2M20 1.500h1M4 5.500h6M13 6.500h2M16 6.500h3M0 8.500h5M8 9.500h5M17 9.500h5M2 12.500h2M5 12.500h1M10 12.500h6" stroke={B} /><path d="M12 4.500h1M14 4.500h1M3 10.500h1" stroke={M} /></pattern>
        <pattern id="flat" width="21" height="19" patternUnits="userSpaceOnUse"><path d="M0 1.500h6M10 2.500h5M4 4.500h1M6 4.500h1M16 5.500h5M7 7.500h6M0 8.500h4M15 10.500h1M17 10.500h1M19 10.500h1M3 11.500h6M11 13.500h6M0 14.500h5M6 16.500h1M8 16.500h1M14 17.500h6" stroke={P} /></pattern>
      </defs>
      <path d="M368 144h912v588H368z" fill={B} />
      <g stroke="#96666c" strokeDasharray="5 3 1 3">
        <path d="M367 333L540 280L700 229L795 199L900 174L1022 144" />
        <path d="M367 450L540 636L632 733" />
      </g>
      <g shapeRendering="crispEdges">
        <path d="M1165 253L1157 270 1137 292 1113 313 1093 330 1083 350 1072 373 1067 400 1061 407 1064 423 1070 433 1073 467 1083 490 1107 503 1155 518 1200 550 1240 580 1280 603V480L1180 300zM1231 201l49 2v9h-49z" fill="url(#mud)" />
        <path d="M1190 188L1178 197 1173 207 1169 222 1167 250 1163 287 1158 302 1152 310 1137 316 1118 330 1093 353 1079 368 1073 387 1070 403 1065 406 1065 412 1067 418 1073 427 1090 438 1120 451 1147 462 1162 477 1183 489 1197 493 1205 490 1215 495 1240 500 1260 512 1280 523V211L1247 210 1227 203 1207 192z" fill="url(#lt)" />
        <path d="M1185 195L1190 192 1225 207 1280 217V375H1168V380H1122L1115 357 1122 345 1155 330 1207 316z" fill="url(#mid)" />
        <path d="M1190 188L1178 197 1173 207 1169 222 1167 250 1163 287 1158 302 1154 312 1156 323 1207 316 1188 212 1185 203 1186 194 1192 192 1225 207 1240 213 1280 217V211L1247 210 1227 203 1207 192z" fill={G} />
        <path d="M1079 368L1087 358 1115 357 1122 380H1168V371H1207L1202 478 1155 468 1147 460 1120 448 1090 435 1075 425 1069 405z" fill={G} />
        <path d="M1240 213h14v130h-8zM1256 290h24v12h-24zM1258 213v78M1218 260l20 4" fill={G} />
      </g>
      <g stroke={S} strokeWidth="1">
        <path d="M1197 211L1231 340" strokeWidth="3.500" />
        <path d="M1151 357.500H1280" strokeWidth="3" />
        <path d="M1210 348.500h70" strokeWidth="2.500" />
        <path d="M1186 194l-1 10 5 12 22 126M1192 192l34 14 54 10M1201 211l8 30 30 105M1204 211l36 100M1190 216l22 128" strokeDasharray="5 2" />
        <path d="M1149 356v-8l6-6h60M1222 342h18v12" />
        <path d="M1193 232l14-2M1199 251l20-3M1206 272l24-6M1229 305l40-8M1208 215h12l4 50 10 8-3 4h-12M1212 220h8M1212 225h8M1213 230h9M1214 235h9M1215 240h10M1216 245h12M1220 252h12M1222 257h12M1224 262h12M1226 275h8M1228 218l5-4 6 3-3 6M1247 213l-2 15M1248 245l4 60 28 5M1254 270l26-3M1280 283c-9 8-9 22-4 30M1237 302l4 40M1241 300l4 10 20-4M1240 315h18M1241 322h16M1243 329h14" />
        <path d="M1247 390l-1-24 5-1 10-2M1258 366l12 30M1264 366l10 28M1270 364l8 22M1260 338v20M1242 342v14" />
      </g>
      <g stroke={W} strokeWidth="1.600"><path d="M1105 418l3 7 5 1 8-6h12M1142 420h13l10 7 15 1c14-4 8-22 22-31h78M1203 431h77M1269 392v106h11M1205 472l64 26" /></g>
      <g stroke={S}><path d="M1125 419.500h14M1153 420l10 7M1170 428h8M1184 426l7-11M1200 396.500h12M1245 396.500h14M1203 430.500h70M1268.500 398v98M1205 472l60 24" /><path d="M1225 400v22l10 8v18l-8 10M1250 402l4 12-4 10M1218 440v20l15 5M1246 440l8 12v22M1256 440l8 18M1210 405v20M1262 405l-6 20M1215 445l18-6M1240 460l26 4M1220 480l26-20M1275 402v90M1191 466l10-9M1236 400v30M1230 445l6 10M1250 480l12-8M1228 410h14M1252 408h12M1246 424h18" strokeDasharray="3 2" strokeOpacity="0.800" /></g>
      <g fill={B}><ellipse cx="1173.500" cy="387" rx="2.500" ry="9" /><circle cx="1269" cy="256" r="2" /><circle cx="1244" cy="472" r="3" /><circle cx="1276" cy="393" r="2" /></g>
      <path d="M1098 412l2-10h6l3 10M1112 424v-10M1102 428v3M1112 414l8 8" stroke={B} strokeDasharray="2 2" strokeWidth="1.200" />
      <path d="M1146 400l2-5 2 5z" stroke={S} />
      <path d="M1280 312h-12v10l4 10h8" stroke={O} strokeWidth="3" />
      <g fill={P}><path d={plane} transform="translate(1228 229)" /><path d={plane} transform="translate(1243 232)" /><path d={plane} transform="translate(1265 316)" /></g>
      <g fontFamily="Noto Sans" fontStyle="italic" fontSize="7.500" textAnchor="middle" stroke={G} strokeWidth="1.500" paintOrder="stroke" fill={P} fontWeight="500">
        <text x="1243" y="245">Fedex</text>
        <text x="1246" y="329" textAnchor="start" textLength="32" lengthAdjust="spacingAndGlyphs">Ted Steve</text>
        <text x="1246.500" y="338.500" textAnchor="start" textLength="31.500" lengthAdjust="spacingAndGlyphs">Anchorag</text>
        <text x="1242.500" y="347.500" textAnchor="start" textLength="35.500" lengthAdjust="spacingAndGlyphs">Internation</text>
        <text x="1253.500" y="356.500" textAnchor="start" textLength="24" lengthAdjust="spacingAndGlyphs">Airport</text>
        <g fill={K}><text x="1183" y="290" textLength="53">Point Woronzof</text><text x="1183" y="299">Park</text></g>
        <g fill={K} fontSize="9"><text x="1147" y="417">Kincaid</text><text x="1147" y="428">Park</text></g>
      </g>
      <path d="M553 315h373v272H553z" fill={M} shapeRendering="crispEdges" />
      <path d="M553 586.500h373M925.500 315v272M553 315.500h373" stroke={S} strokeDasharray="1 3" />
      <path d="M828 317L845 316 868 325 874 335H907V360L903 417 888 450 865 485 833 513 813 522 773 528 757 538 717 567 683 583 667 584 657 582 630 572 620 565 585 543 612 517 640 483 677 437 703 397 710 370 723 347 747 337z" fill="url(#flat)" shapeRendering="crispEdges" />
      <path d="M828.300 319.300L846 319.300 851.700 326.300 867.700 327.700 870.700 338.300 866.700 385 851.700 416.700 811.700 469.300 740 533.300 703.300 561 689.300 565.300 670 561.700 651.700 560.500 628 562.300 603.300 562.300 590.700 555 585.300 547.300 589.300 543.700 613.300 546 650 536.300 664 524.300 683.300 489.300 699 440 715 366.700 722.300 352.700 748.300 339.300 786.700 331z" fill={P} stroke={K} strokeWidth="1.200" />
    </svg>
  );
}

/* ---------- floating classification toolbar ---------- */
function Pill({ t, w, tw }: { t: string; w: string; tw: number }) {
  return (
    <div className={"flex h-[17px] shrink-0 items-center bg-gradient-to-r from-[#221f26] from-25% via-[#65365a] via-65% to-[#7c5a70] pl-[1px] text-[11.500px] text-[#f3f3f3] " + w}>
      <svg width="12" height="12" fill="none" className="mr-[5px]"><circle cx="6" cy="6" r="4.600" stroke={W} strokeWidth="1.800" /></svg>
      <Fit w={tw}>{t}</Fit>
    </div>
  );
}
const Tag = ({ t, w }: { t: string; w: number }) => <Fit w={w} className="text-[11.500px] font-bold">{t}</Fit>;
const DarkLens = () => <><path d="M9 14.500L1.500 22" stroke={K} strokeWidth="4.500" /><circle cx="14" cy="9.500" r="8.500" fill={B} stroke={K} strokeWidth="2.200" /></>;

function FloatBar() {
  return (
    <div className={"absolute left-[123px] top-[637px] flex h-[32px] w-[1110px] items-center pl-1 shadow-[inset_0_0_0_1px_#8fa1a6] " + dither}>
      <Grip h="h-[24px]" />
      <div className="ml-2 flex items-center">
        <Svg><path d="M0 0h24v15h-6v5h-3v4H3v-3H0z" fill={K} /><path d="M2 5h20v5L10 20H2z" fill={O} stroke={P} strokeDasharray="2 1" /><path d="M5 11h8M9 7v8" stroke={W} strokeWidth="1.500" /></Svg>
        <div className="ml-2 mr-1"><Svg><DarkLens /><path d="M7 10c4 0 8-1 12-4 0 5-3 9-9 8z" fill={P} stroke={K} /><path d="M9 12l9-3" stroke={O} strokeWidth="1.500" /></Svg></div>
        <Pill t="RGB =" w="w-[57px]" tw={31} />
        <div className="mr-[5px] flex h-5 w-[79px] items-center justify-between border border-[#221f26] bg-[#f3f3f3] px-1 text-[11.500px]">
          <span>-</span>
          <svg width="9" height="6" fill="none"><path d="M.5 1L4.500 5 8.500 1" stroke={K} strokeWidth="1.200" /></svg>
        </div>
        <Svg><path d="M12 2h11L3 23" fill={G} /><path d="M1 22C4 12 6 2 11.500 2S19 12 23 22" stroke={K} strokeWidth="2.200" /><path d="M7 21L18 8" stroke={P} strokeWidth="2.200" /><circle cx="8" cy="12" r="2.800" stroke={P} strokeWidth="2" /><circle cx="16.500" cy="19" r="2.800" stroke={P} strokeWidth="2" /><path d="M0 23h5M18 23h6" stroke={B} strokeWidth="1.500" /></Svg>
        <div className="mx-2"><Svg><path d="M12 2h11l-7 7" fill={G} /><path d="M6 8h4M15 8h6" stroke={O} strokeWidth="2" /><path d="M0 22c6-1 6-20 11.500-20S17 21 24 22" stroke={K} strokeWidth="2.200" /><circle cx="11" cy="17" r="3.500" stroke={K} strokeWidth="2" /><path d="M11 12.800h6" stroke={K} strokeWidth="2" /><path d="M2 23h6M15 23h7" stroke={B} strokeWidth="1.400" /></Svg></div>
        <Svg><DarkLens /><circle cx="14" cy="9.500" r="5.500" fill={O} /><path d="M10 9.500h8M14 5.500v8" stroke={W} strokeWidth="2" /></Svg>
        <div className="ml-1 mr-1"><Pill t="ROI" w="w-[57px]" tw={20} /></div>
        <Svg><path d="M1.500 1.500h21l-6 7v6l6 8h-21z" fill={O} stroke={B} strokeWidth="1.200" /><path d="M0 0h2.500v2.500H0zM21.500 0H24v2.500h-2.500zM0 21.500h2.500V24H0zM21.500 21.500H24V24h-2.500zM15.500 7.500h2v2h-2zM15.500 13.500h2v2h-2z" fill={P} /></Svg>
        <div className="mx-2"><Svg><rect x="1" y="1" width="22" height="22" rx="2" fill={O} stroke={B} strokeWidth="1.800" /><path d="M5 12h14M12 5v14" stroke={W} strokeWidth="2.200" /></Svg></div>
        <Svg><rect x="0.500" y="0.500" width="23" height="23" rx="3" fill={S} stroke={M} /><path d="M6 6c-5 6-1 13 6 13s11-7 6-13" stroke={W} strokeWidth="2.400" /><path d="M13 4h7l-1 6z" fill={W} /></Svg>
        <div className="w-[7px]" />
        <Tag t="Dist" w={22} />
        <Spin v="0.010000" w="w-[100px]" tw={47} />
        <div className="w-[3px]" />
        <Tag t="Min" w={20} />
        <Spin v="60" w="w-[60px]" tw={13} />
        <div className="w-[3px]" />
        <Tag t="Max" w={24} />
        <Spin v="100" w="w-[60px]" tw={18} />
        <div className="mx-1"><Svg><DarkLens /><path d="M9 7h10M9 13h10" stroke={M} strokeWidth="3" /><path d="M9 9.500h10M14 4.500v10" stroke={W} strokeWidth="1.600" /></Svg></div>
        <Pill t="Preview" w="w-[64px]" tw={39} />
        <div className="mx-1"><Svg><rect width="24" height="24" rx="2" fill={K} /><path d="M2 2h9v10H2zM15 14h8v8h-8z" fill={B} /><path d="M12 2h11v5H12z" fill={O} /><path d="M12 7h11v3H12z" fill={P} /><path d="M3 21h9" stroke={O} strokeWidth="1.500" strokeDasharray="2 1" /><path d="M5 13h15M12.500 6v14" stroke={W} strokeWidth="2" /></Svg></div>
        <div className="mx-1"><Svg><rect x="1" y="1" width="22" height="22" rx="2" fill={M} stroke={K} strokeWidth="2" /><path d="M9 2h9v20H9z" fill={P} /><path d="M7 5c-5 6-2 14 5 14s11-7 6-13" stroke={W} strokeWidth="2.400" /><path d="M13 4h7l-1 6z" fill={W} /></Svg></div>
        <div className="w-[4px]" />
        <Tag t="T" w={6} />
        <Spin v="0" w="w-[50px]" tw={7} />
        <div className="w-[3px]" />
        <Tag t="S" w={7} />
        <Spin v="200" w="w-[60px]" tw={19} />
        <div className="ml-[5px] mr-[7px]"><Svg><path d="M1 3c0-4 19-4 19 0v4l3 3v13H2V8H1z" fill={K} /><path d="M4 9v12M8 12v11M13 16v7" stroke={P} strokeWidth="1.200" /><path d="M16 11l4-3 3 4-3 4z" fill={O} /></Svg></div>
        <Svg><path d="M1 5l4-4h14l4 4v14l-4 4H5l-4-4z" fill={B} /><path d="M1 5l4-4h14l4 4v4H1z" fill={G} /><path d="M8 4h8v15H9z" fill={M} fillOpacity="0.700" /><path d="M1 15h7v3H1zM18 6h5v5h-5z" fill={O} /><text x="0.500" y="15.500" fontFamily="DejaVu Sans" fontSize="9.500" fontWeight="bold" textLength="23" fill={K}>KML</text></Svg>
      </div>
    </div>
  );
}

/* ---------- status bar ---------- */
function StatusBar() {
  return (
    <div className={"flex h-[27px] shrink-0 items-center pb-px pl-1 pt-[2px] text-[11.500px] " + dither}>
      <div className="flex h-[20px] w-[200px] shrink-0 items-center border border-[#221f26] bg-[#f3f3f3] pl-2 text-[#65365a]">
        <svg width="13" height="13" fill="none" className="mr-[6px]"><circle cx="5" cy="5" r="4" stroke={K} strokeWidth="1.100" /><path d="M8 8l4.500 4.500" stroke={K} strokeWidth="1.300" /></svg>
        <Fit w={112}>Type to locate (Ctrl+K)</Fit>
      </div>
      <div className="w-[8px]" />
      <Fit w={125}>4 legend entries removed.</Fit>
      <div className="w-[152px]" />
      <Fit w={53}>Coordinate</Fit>
      <div className="ml-1 flex h-5 w-[108px] items-center border border-[#221f26] bg-[#f3f3f3] pl-[3px]"><Fit w={98}>-16723754,8646328</Fit></div>
      <svg width="18" height="18" fill="none" className="ml-[2px]"><ellipse cx="6" cy="6" rx="2.200" ry="4" transform="rotate(-35 6 6)" fill={M} stroke={K} strokeWidth="1.800" /><circle cx="11.500" cy="12" r="3.500" fill={M} stroke={K} strokeWidth="1.800" /><path d="M10 9L15.500 2M2 10l5 5M10 1l2 4" stroke={K} strokeWidth="2" /></svg>
      <div className="w-[11px]" />
      <Fit w={25}>Scale</Fit>
      <div className="ml-1 flex h-5 w-[78px] items-center justify-between border border-[#221f26] bg-[#f3f3f3] pl-1 pr-1"><Fit w={46}>1:187251</Fit><svg width="9" height="6" fill="none"><path d="M.5 1L4.500 5 8.500 1" stroke={K} strokeWidth="1.200" /></svg></div>
      <svg width="12" height="15" fill="none" className="ml-[11px]"><path d="M2.500 7V4c0-4 7-4 7 0v3" stroke={M} strokeWidth="2" /><rect y="6.500" width="12" height="8.500" rx="1" fill={K} /></svg>
      <div className="w-2" />
      <Fit w={44}>Magnifier</Fit>
      <div className="w-1" />
      <Spin v="100%" w="w-[82px]" tw={28} h="h-[20px]" />
      <div className="w-[8px]" />
      <Fit w={41}>Rotation</Fit>
      <div className="w-[10px]" />
      <Spin v="0.0 °" w="w-[80px]" tw={24} h="h-[20px]" />
      <div className="w-[6px]" />
      <Check />
      <div className="w-1" />
      <Fit w={35}>Render</Fit>
      <svg width="15" height="14" fill="none" className="ml-[19px]"><path d="M1 7h13l-3-5.500H4zM1 7l4 6h5l4-6" fill={M} stroke={P} strokeWidth="1.300" /><path d="M0 7h15M7.500 0v14M2 4h11M3 10h9M4.500 2v10M10.500 2v10" stroke={P} strokeWidth="1.100" /></svg>
      <div className="w-[3px]" />
      <Fit w={54}>EPSG:3857</Fit>
      <svg width="16" height="16" className="ml-4"><path d="M3.500 1h9L16 4v5l-3.500 3H11v3.500L7 12H3.500L0 9V4z" fill={K} /><path d="M4 5.500h2v2H4zM7 5.500h2v2H7zM10 5.500h2v2h-2z" fill={S} /></svg>
    </div>
  );
}

const menus: [string, string, string, number][] = [
  ["Pro", "j", "ect", 37], ["", "E", "dit", 21], ["", "V", "iew", 25], ["", "L", "ayer", 29], ["", "S", "ettings", 42],
  ["", "P", "lugins", 39], ["Vect", "o", "r", 33], ["", "R", "aster", 32], ["", "D", "atabase", 48], ["", "W", "eb", 24],
  ["MMQGIS", "", "", 48], ["SCP", "", "", 21], ["Pro", "c", "essing", 57], ["", "H", "elp", 25],
];

export default function App() {
  return (
    <div className="relative flex h-[760px] w-[1280px] flex-col overflow-hidden bg-[#f3f3f3] font-['Noto_Sans',sans-serif] leading-none text-[#221f26]">
      <div className="flex h-[23px] shrink-0 items-center pl-1 text-[11.500px]">
        <svg width="15" height="16" fill="none"><circle cx="7" cy="7" r="5" stroke={P} strokeWidth="3" /><path d="M2 3c3-4 9-3 11 2" stroke={O} strokeWidth="1.500" /><path d="M5 6l4-1 5 8-4 1z" fill={O} /><path d="M1 13l6 1M6 7l3 6" stroke={W} strokeWidth="2" /><path d="M1 12l4 2" stroke={S} strokeWidth="1.500" /></svg>
        <div className="ml-1"><Fit w={61}>*ch7 - QGIS</Fit></div>
        <svg width="11" height="11" className="ml-[1075px] mb-1"><path d="M0 6.500h10" stroke={K} /></svg>
        <svg width="11" height="11" fill="none" className="mb-[3px] ml-[34px]"><path d="M2.500 2.500v-2h7v7h-2" stroke={K} /><path d="M.5 2.500h7v7h-7z" stroke={K} /></svg>
        <svg width="11" height="11" className="mb-[3px] ml-[34px]"><path d="M.5.5l10 10M10.500.5L.5 10.500" stroke={K} strokeWidth="1.200" /></svg>
      </div>
      <div className="flex h-[23px] shrink-0 items-center gap-[15.700px] pb-[2px] pl-2 text-[11.500px]">
        {menus.map(([a, u, b, w]) => (
          <Fit key={a + u + b} w={w}>{a}<span className="underline underline-offset-2">{u}</span>{b}</Fit>
        ))}
      </div>
      <Toolbar1 />
      <Toolbar2 />
      <Toolbar3 />
      <div className={"flex min-h-0 flex-1 " + dither}>
        <div className="mr-1 flex w-[363px] shrink-0 flex-col pt-px">
          <BrowserDock />
          <LayersDock />
        </div>
        <div className="flex-1 overflow-hidden border border-[#65365a]"><MapCanvas /></div>
      </div>
      <StatusBar />
      <FloatBar />
    </div>
  );
}
